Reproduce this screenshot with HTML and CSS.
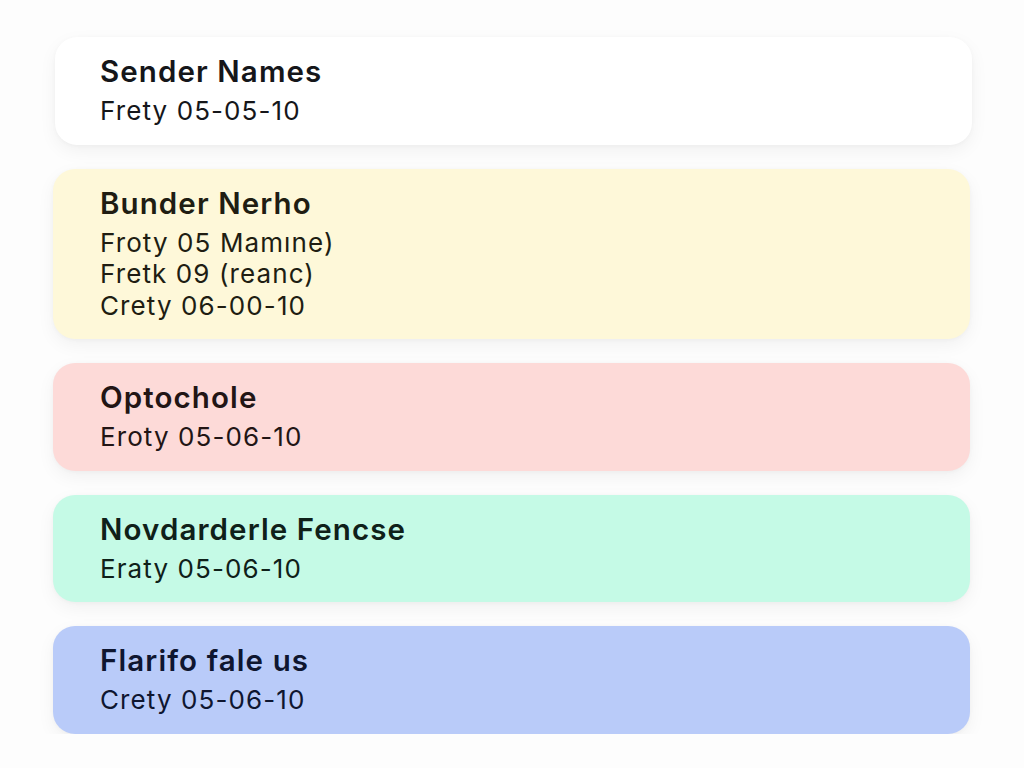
FILE: index.html
```html
<!DOCTYPE html>
<html lang="en">
<head>
<meta charset="utf-8">
<title>Senders</title>
<link rel="stylesheet" href="styles.css">
</head>
<body>
<main class="list">
  <section class="card card-white">
    <h2 class="title">Sender Names</h2>
    <p class="line">Frety 05-05-10</p>
  </section>
  <section class="card card-yellow">
    <h2 class="title">Bunder Nerho</h2>
    <p class="line">Froty 05 Mamıne)</p>
    <p class="line">Fretk 09 (reanc)</p>
    <p class="line">Crety 06-00-10</p>
  </section>
  <section class="card card-pink">
    <h2 class="title">Optochole</h2>
    <p class="line">Eroty 05-06-10</p>
  </section>
  <section class="card card-mint">
    <h2 class="title">Novdarderle Fencse</h2>
    <p class="line">Eraty 05-06-10</p>
  </section>
  <section class="card card-blue">
    <h2 class="title">Flarifo fale us</h2>
    <p class="line">Crety 05-06-10</p>
  </section>
</main>
</body>
</html>
```
FILE: styles.css
```css
html, body {
  margin: 0;
  padding: 0;
  background: #fdfdfd;
}
body {
  font-family: Inter, "Noto Sans", "Liberation Sans", sans-serif;
  color: #15161a;
}
.list {
  display: flex;
  flex-direction: column;
  gap: 24px;
  padding: 37px 0 0 53px;
  width: 917px;
}
.card {
  border-radius: 22px;
  padding: 17px 0 18px 47px;
  box-shadow: 0 6px 18px rgba(0, 0, 0, 0.05), 0 1px 4px rgba(0, 0, 0, 0.03);
}
.card-white {
  margin-left: 2px;
  margin-right: -2px;
  padding-left: 45px;
}
.title {
  margin: 0 0 7px;
  font-size: 29.5px;
  line-height: 34px;
  font-weight: 600;
  letter-spacing: 1.1px;
}
.line {
  margin: 0;
  font-size: 26px;
  line-height: 31.5px;
  font-weight: 400;
  letter-spacing: 1.1px;
}
.card-white { background: #ffffff; }
.card-yellow { background: #fef8d9; color: #201d12; }
.card-pink { background: #fddad8; color: #221515; }
.card-mint { background: #c5fae6; color: #0f2019; }
.card-blue { background: #b9cbf9; color: #0f1630; }
```
